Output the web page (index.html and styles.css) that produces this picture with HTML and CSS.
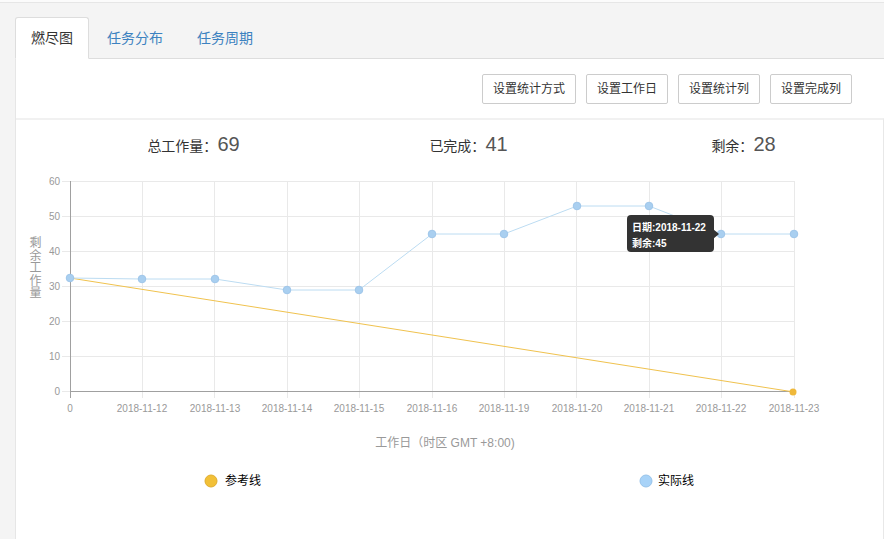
FILE: index.html
```html
<!DOCTYPE html>
<html lang="zh">
<head>
<meta charset="utf-8">
<title>燃尽图</title>
<link rel="stylesheet" href="styles.css">
</head>
<body>
<div class="topline"></div>
<div class="wrap">
  <ul class="tabs">
    <li class="tab active">燃尽图</li>
    <li class="tab">任务分布</li>
    <li class="tab">任务周期</li>
  </ul>
  <div class="panel">
    <div class="toolbar">
      <button class="btn">设置统计方式</button>
      <button class="btn">设置工作日</button>
      <button class="btn">设置统计列</button>
      <button class="btn">设置完成列</button>
    </div>
    <div class="chart-box">
      <div class="stats">
        <div class="stat"><span class="stat-label">总工作量：</span><span class="stat-num">69</span></div>
        <div class="stat"><span class="stat-label">已完成：</span><span class="stat-num">41</span></div>
        <div class="stat"><span class="stat-label">剩余：</span><span class="stat-num">28</span></div>
      </div>
      <svg class="chart" width="867" height="380" viewBox="0 0 867 380" xmlns="http://www.w3.org/2000/svg">
        <g transform="translate(-16,-162)">
          <g class="grid">
            <line x1="62" y1="180.5" x2="794" y2="180.5"/>
            <line x1="62" y1="215.5" x2="794" y2="215.5"/>
            <line x1="62" y1="250.5" x2="794" y2="250.5"/>
            <line x1="62" y1="285.5" x2="794" y2="285.5"/>
            <line x1="62" y1="320.5" x2="794" y2="320.5"/>
            <line x1="62" y1="355.5" x2="794" y2="355.5"/>
            <line x1="62" y1="390.5" x2="70" y2="390.5"/>
            <line x1="142.5" y1="180" x2="142.5" y2="397"/>
            <line x1="214.5" y1="180" x2="214.5" y2="397"/>
            <line x1="287.5" y1="180" x2="287.5" y2="397"/>
            <line x1="359.5" y1="180" x2="359.5" y2="397"/>
            <line x1="432.5" y1="180" x2="432.5" y2="397"/>
            <line x1="504.5" y1="180" x2="504.5" y2="397"/>
            <line x1="576.5" y1="180" x2="576.5" y2="397"/>
            <line x1="649.5" y1="180" x2="649.5" y2="397"/>
            <line x1="721.5" y1="180" x2="721.5" y2="397"/>
            <line x1="794.5" y1="180" x2="794.5" y2="397"/>
          </g>
          <g class="axis">
            <line x1="70.5" y1="180" x2="70.5" y2="397"/>
            <line x1="70" y1="390.5" x2="795" y2="390.5"/>
          </g>
          <g class="ylabels">
            <text x="60" y="184">60</text>
            <text x="60" y="219">50</text>
            <text x="60" y="254">40</text>
            <text x="60" y="289">30</text>
            <text x="60" y="324">20</text>
            <text x="60" y="359">10</text>
            <text x="60" y="394">0</text>
          </g>
          <g class="xlabels">
            <text x="70" y="411">0</text>
            <text x="142" y="411">2018-11-12</text>
            <text x="215" y="411">2018-11-13</text>
            <text x="287" y="411">2018-11-14</text>
            <text x="359" y="411">2018-11-15</text>
            <text x="432" y="411">2018-11-16</text>
            <text x="504" y="411">2018-11-19</text>
            <text x="577" y="411">2018-11-20</text>
            <text x="649" y="411">2018-11-21</text>
            <text x="721" y="411">2018-11-22</text>
            <text x="794" y="411">2018-11-23</text>
          </g>
          <text class="ytitle" x="34" y="267">剩余工作量</text>
          <text class="xtitle" x="445" y="446">工作日（时区 GMT +8:00)</text>

          <polyline class="ref-line" points="70,277 794,391"/>
          <circle class="ref-dot" cx="793" cy="391" r="3.5"/>

          <polyline class="act-line" points="70,277 142,278 215,278 287,289 359,289 432,233 504,233 577,205 649,205 721,233 794,233"/>
          <g class="act-dots">
            <circle cx="70" cy="277" r="3.8"/>
            <circle cx="142" cy="278" r="3.8"/>
            <circle cx="215" cy="278" r="3.8"/>
            <circle cx="287" cy="289" r="3.8"/>
            <circle cx="359" cy="289" r="3.8"/>
            <circle cx="432" cy="233" r="3.8"/>
            <circle cx="504" cy="233" r="3.8"/>
            <circle cx="577" cy="205" r="3.8"/>
            <circle cx="649" cy="205" r="3.8"/>
            <circle cx="721" cy="233" r="3.8"/>
            <circle cx="794" cy="233" r="3.8"/>
          </g>

          <g class="tooltip">
            <rect x="627" y="214" width="87" height="37" rx="4"/>
            <polygon points="713,228 719,233 713,238"/>
            <text x="632" y="230">日期:2018-11-22</text>
            <text x="632" y="246">剩余:45</text>
          </g>

          <g class="legend">
            <circle class="lg-ref" cx="211" cy="480" r="6"/>
            <text x="225" y="484">参考线</text>
            <circle class="lg-act" cx="646" cy="480" r="6"/>
            <text x="658" y="484">实际线</text>
          </g>
        </g>
      </svg>
    </div>
  </div>
</div>
</body>
</html>
```
FILE: styles.css
```css
* { box-sizing: border-box; }
html, body { margin: 0; padding: 0; }
body {
  background: #f4f4f4;
  font-family: "Liberation Sans", "Noto Sans CJK SC", sans-serif;
  font-size: 12px;
  color: #333;
  height: 539px;
  overflow: hidden;
}
.topline {
  height: 3px;
  background: #fbfbfb;
  border-bottom: 1px solid #e6e6e6;
}
.wrap {
  margin-left: 15px;
  padding-top: 14px;
}
.tabs {
  list-style: none;
  margin: 0;
  padding: 0;
  display: flex;
  border-bottom: 1px solid #dddddd;
}
.tab {
  padding: 10px 15px;
  line-height: 20px;
  font-size: 14px;
  border: 1px solid transparent;
  border-radius: 3px 3px 0 0;
  margin-right: 2px;
  margin-bottom: -1px;
  color: #3c82c0;
}
.tab.active {
  background: #fff;
  border-color: #dddddd #dddddd transparent;
  color: #333;
}
.panel {
  background: #fff;
  border-left: 1px solid #e6e6e6;
  height: 480px;
}
.toolbar {
  height: 59px;
  padding: 15px 32px 0 0;
  display: flex;
  justify-content: flex-end;
  gap: 10px;
}
.btn {
  height: 30px;
  padding: 5px 10px;
  line-height: 18px;
  font-family: inherit;
  font-size: 12px;
  color: #333;
  background: #fff;
  border: 1px solid #cccccc;
  border-radius: 2px;
}
.chart-box {
  border-top: 2px solid #f1f1f1;
  border-right: 1px solid #e8e8e8;
  height: 430px;
  overflow: hidden;
}
.stats {
  height: 43px;
  padding: 6px 0 0 40px;
  display: grid;
  grid-template-columns: repeat(3, 275px);
  align-items: center;
}
.stat {
  text-align: center;
  height: 36px;
  display: flex;
  justify-content: center;
  align-items: center;
}
.stat-label { font-size: 14px; color: #333; }
.stat-num { font-size: 20px; color: #555; }
.chart { display: block; }
.grid line { stroke: #e9e9e9; stroke-width: 1; }
.axis line { stroke: #a0a0a0; stroke-width: 1; }
.ylabels text {
  font-size: 10px;
  fill: #999;
  text-anchor: end;
  font-family: "Liberation Sans", sans-serif;
}
.xlabels text {
  font-size: 10px;
  fill: #999;
  text-anchor: middle;
  font-family: "Liberation Sans", sans-serif;
}
.ytitle {
  font-size: 12px;
  fill: #999;
  text-anchor: middle;
  writing-mode: vertical-rl;
  letter-spacing: 0.5px;
}
.xtitle {
  font-size: 12px;
  fill: #999;
  text-anchor: middle;
}
.ref-line { fill: none; stroke: #f0c24e; stroke-width: 1; }
.ref-dot { fill: #efb83a; }
.act-line { fill: none; stroke: #bcdcf2; stroke-width: 1; }
.act-dots circle { fill: #a9cff0; stroke: #9fc6ea; stroke-width: 1; }
.tooltip rect, .tooltip polygon { fill: #333333; }
.tooltip text {
  font-size: 10px;
  font-weight: bold;
  fill: #fff;
}
.legend text { font-size: 12px; fill: #000; }
.lg-ref { fill: #f2c037; stroke: #e0ad2e; stroke-width: 1; }
.lg-act { fill: #a8d3f8; stroke: #97c3ea; stroke-width: 1; }
```
